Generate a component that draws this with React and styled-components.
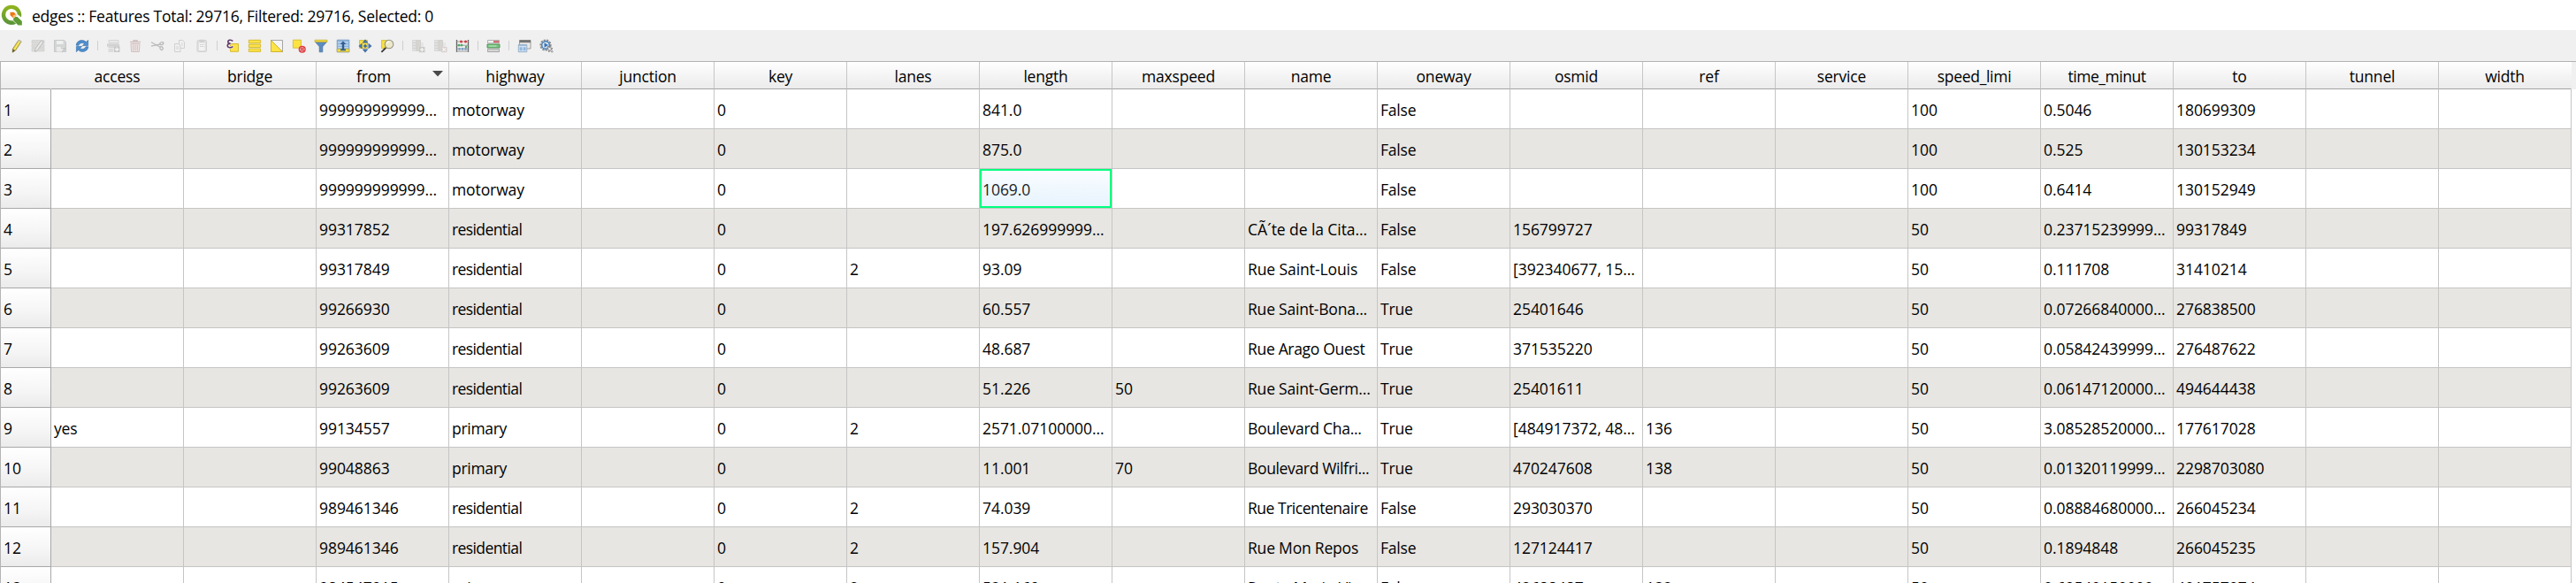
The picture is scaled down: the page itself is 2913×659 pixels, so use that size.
import React from "react";
import styled, { createGlobalStyle, css } from "styled-components";

const GlobalStyle = createGlobalStyle`
  * { box-sizing: border-box; }
  html, body { margin: 0; padding: 0; overflow: hidden; background: #fff; }
  body { font-family: "Open Sans", "Noto Sans", sans-serif; font-size: 17.5px; color: #000; }
`;

const Window = styled.div`
  display: flex;
  flex-direction: column;
  width: 2913px;
  height: 659px;
  overflow: hidden;
  background: #fff;
`;

const TitleBar = styled.header`
  display: flex;
  align-items: center;
  gap: 11px;
  flex: none;
  height: 34px;
  padding-left: 1px;
`;

const Title = styled.h1`
  margin: 0;
  padding-top: 1px;
  font-size: 17.5px;
  font-weight: 400;
  line-height: 24px;
  letter-spacing: -0.24px;
  white-space: pre;
`;

const Toolbar = styled.nav`
  display: flex;
  align-items: center;
  flex: none;
  height: 35px;
  padding-left: 5px;
  background: #f0f0f0;
`;

const ToolButton = styled.button`
  display: flex;
  align-items: center;
  justify-content: center;
  width: 25px;
  height: 25px;
  padding: 0;
  border: 0;
  background: none;
  opacity: ${(p) => (p.disabled ? 0.36 : 1)};
  svg { display: block; }
`;

const Separator = styled.i`
  width: 10px;
  height: 11px;
  &::before {
    content: "";
    display: block;
    width: 1px;
    height: 100%;
    margin-left: 5px;
    background: #cfcfcf;
  }
`;

const columns = css`
  display: grid;
  grid-template-columns: 57px repeat(19, 150px);
`;

const Table = styled.main`
  flex: 1;
  overflow: hidden;
  border-left: 1px solid #b4b4b4;
`;

const HeaderRow = styled.div`
  ${columns}
  height: 32px;
  border-top: 1px solid #b2b2b2;
  background: #f0f0f0;
`;

const HeaderCell = styled.div`
  position: relative;
  display: flex;
  align-items: center;
  justify-content: center;
  padding: 2px ${(p) => (p.$sorted ? 20 : 0)}px 0 0;
  border-right: 1px solid ${(p) => (p.$open ? "transparent" : "#c6c6c6")};
  border-bottom: 1px solid #a3a3a3;
  background: linear-gradient(#ffffff, #f4f4f4 50%, #ebebeb) border-box;
`;

const SortArrow = styled.svg`
  position: absolute;
  top: 10px;
  right: 6px;
`;

const Row = styled.div`
  ${columns}
  height: 45px;
  background: ${(p) => (p.$alt ? "#e8e6e2" : "#ffffff")};
  width: 2907px;
`;

const RowNumber = styled.div`
  display: flex;
  align-items: center;
  padding: 2px 0 0 3px;
  border-right: 1px solid #a8a8a8;
  border-bottom: 1px solid #a8a8a8;
  background: linear-gradient(#ffffff, #f5f5f5 60%, #ebebeb);
`;

const Cell = styled.div`
  display: flex;
  align-items: center;
  padding: 2px 0 0 3px;
  overflow: hidden;
  border-right: 1px solid #c5c5c5;
  border-bottom: 1px solid #c5c5c5;
  ${(p) =>
    p.$current &&
    css`
      color: #1d2327;
      background: linear-gradient(#fbfdff, #e6f3fd);
      box-shadow: inset 0 0 0 2px #00ff80;
    `}
`;

const Label = styled.span`
  white-space: pre;
  letter-spacing: ${(p) => p.$tracking}px;
`;

const TRACKING = {
  residential: -0.6,
  primary: -0.3,
  motorway: -0.1,
  "Rue Saint-Louis": -0.08,
  "Rue Tricentenaire": -0.48,
  "Rue Arago Ouest": -0.32,
  "Boulevard Wilfri...": -0.35,
  "Boulevard Cha...": -0.27,
  "CÃ´te de la Cita...": -0.08,
  speed_limi: -0.3,
  time_minut: -0.45,
  highway: -0.15,
};

function Text({ children }) {
  const numeric = /^[[\d., ]*$/.test(children);
  return <Label $tracking={TRACKING[children] ?? (numeric ? -0.05 : -0.2)}>{children}</Label>;
}

const FIELDS = [
  "access", "bridge", "from", "highway", "junction", "key", "lanes", "length", "maxspeed", "name",
  "oneway", "osmid", "ref", "service", "speed_limi", "time_minut", "to", "tunnel", "width",
];

const row = (from, highway, lanes, length, maxspeed, name, oneway, osmid, ref, speed_limi, time_minut, to, access) => ({
  access, from, highway, key: "0", lanes, length, maxspeed, name, oneway, osmid, ref, speed_limi, time_minut, to,
});

const FEATURES = [
  row("999999999999...", "motorway", "", "841.0", "", "", "False", "", "", "100", "0.5046", "180699309"),
  row("999999999999...", "motorway", "", "875.0", "", "", "False", "", "", "100", "0.525", "130153234"),
  row("999999999999...", "motorway", "", "1069.0", "", "", "False", "", "", "100", "0.6414", "130152949"),
  row("99317852", "residential", "", "197.626999999...", "", "CÃ´te de la Cita...", "False", "156799727", "", "50", "0.23715239999...", "99317849"),
  row("99317849", "residential", "2", "93.09", "", "Rue Saint-Louis", "False", "[392340677, 15...", "", "50", "0.111708", "31410214"),
  row("99266930", "residential", "", "60.557", "", "Rue Saint-Bona...", "True", "25401646", "", "50", "0.07266840000...", "276838500"),
  row("99263609", "residential", "", "48.687", "", "Rue Arago Ouest", "True", "371535220", "", "50", "0.05842439999...", "276487622"),
  row("99263609", "residential", "", "51.226", "50", "Rue Saint-Germ...", "True", "25401611", "", "50", "0.06147120000...", "494644438"),
  row("99134557", "primary", "2", "2571.07100000...", "", "Boulevard Cha...", "True", "[484917372, 48...", "136", "50", "3.08528520000...", "177617028", "yes"),
  row("99048863", "primary", "", "11.001", "70", "Boulevard Wilfri...", "True", "470247608", "138", "50", "0.01320119999...", "2298703080"),
  row("989461346", "residential", "2", "74.039", "", "Rue Tricentenaire", "False", "293030370", "", "50", "0.08884680000...", "266045234"),
  row("989461346", "residential", "2", "157.904", "", "Rue Mon Repos", "False", "127124417", "", "50", "0.1894848", "266045235"),
  row("984547915", "primary", "2", "521.169", "", "Route Marie-Vi...", "False", "42688487", "132", "50", "0.69540150000...", "401757074"),
];

const Icon = ({ children }) => (
  <svg width="16" height="16" viewBox="0 0 16 16" fill="none">{children}</svg>
);

const Logo = () => (
  <svg width="24" height="24" viewBox="0 0 24 24" fill="none">
    <defs>
      <linearGradient id="ring" x1="0" y1="0" x2="0" y2="1">
        <stop offset="0" stopColor="#93b61c" />
        <stop offset="1" stopColor="#57933a" />
      </linearGradient>
    </defs>
    <path d="M17.200 21.800A11.200 11.200 0 1 1 22.900 14.500l-4.300-3.400A6.700 6.700 0 1 0 13.200 18.200z" fill="url(#ring)" />
    <path d="M14.200 14h4.400l5.200 5v4.500h-4.300l-5.300-5.300z" fill="#5f9a35" />
    <path d="M10.500 8.800h4.200l3 3.200-3.400 3.600-3.800-3.400z" fill="#ee7913" />
    <path d="M13.500 12.400l3.600-1.400v2.400l-2.800 2.600z" fill="#f8c27a" />
  </svg>
);

const PencilIcon = () => (
  <Icon>
    <path d="M11.2 1.2l3 1.7-6.6 10-3.4 2.3.2-4z" fill="#e9d33f" stroke="#8e8430" strokeWidth=".8" />
    <path d="M12.6 2L6 12.6" stroke="#fff08a" strokeWidth="1" />
    <path d="M11.2 1.2l3 1.7-1 1.4-3-1.7z" fill="#c9c8c2" />
    <path d="M4.4 11.4l2.9 1.7-3.2 2.2z" fill="#5c5840" />
  </Icon>
);

const MultiEditIcon = () => (
  <Icon>
    <path d="M1 1.5h14v3.5H1zM1 6h14v3.5H1zM1 10.500h14V14H1z" fill="#b5b5ae" stroke="#8d8d85" strokeWidth=".6" />
    <path d="M11.500 2l2.500 1.500-6.500 9-3 2 .5-3.500z" fill="#ddd" stroke="#555" strokeWidth=".9" />
  </Icon>
);

const SaveIcon = () => (
  <Icon>
    <path d="M1.500 1.500h11l2 2v11h-13z" fill="#a4a8aa" stroke="#7e8284" />
    <path d="M4 2h7.500v4H4z" fill="#eee" />
    <path d="M4 9h8v5.500H4z" fill="#e4e4e4" />
    <path d="M9 10l4.500 1-3.500 4" stroke="#777" strokeWidth="1.300" />
  </Icon>
);

const RefreshIcon = () => (
  <Icon>
    <path d="M1.200 7.200C1.600 3.500 4.400 1.600 7.600 1.600c2 0 3.500.7 4.700 1.900L14.600 1.400v6.200H8.300l2.200-2.200C8.600 3.900 4.800 4.300 4 7.200z" fill="#4f8fce" stroke="#2c68a8" strokeWidth=".6" />
    <path d="M14.800 8.800c-.4 3.700-3.200 5.600-6.400 5.600-2 0-3.500-.7-4.700-1.900L1.400 14.600V8.400h6.300l-2.200 2.200c1.900 1.500 5.700 1.100 6.500-1.800z" fill="#4f8fce" stroke="#2c68a8" strokeWidth=".6" />
  </Icon>
);

const AddFeatureIcon = () => (
  <Icon>
    <path d="M3 1.500h11v3H3z" fill="#ddd" stroke="#999" strokeWidth=".8" />
    <path d="M1 5.500h14v3.200H1z" fill="#9d9d9d" />
    <path d="M2.500 9.500h7M2.500 12h6M2.500 14h6" stroke="#a8a8a8" strokeWidth="1.300" />
    <path d="M9 8.500h6.500V15H9z" fill="#858585" />
    <path d="M12.250 9.500V14M10 11.750h4.500" stroke="#fff" strokeWidth="1.300" />
  </Icon>
);

const TrashIcon = () => (
  <Icon>
    <path d="M2 3.500h12M6 3V1.700h4V3" stroke="#a07070" strokeWidth="1.400" />
    <path d="M3 5.500h10l-.6 9H3.600z" fill="#ead4d4" stroke="#a07070" strokeWidth="1" />
    <path d="M5.700 6.500v7M8 6.500v7M10.300 6.500v7" stroke="#a07070" strokeWidth="1" />
  </Icon>
);

const CutIcon = () => (
  <Icon>
    <path d="M1 3.800l10.200 5.400M1 8.200l10.500-2.400" stroke="#5c5c5c" strokeWidth="1.300" />
    <ellipse cx="12.800" cy="5.100" rx="2.100" ry="1.400" transform="rotate(-20 12.800 5.100)" stroke="#555" strokeWidth="1.200" />
    <ellipse cx="12.600" cy="10.600" rx="1.600" ry="1.900" transform="rotate(-35 12.600 10.600)" stroke="#555" strokeWidth="1.200" />
  </Icon>
);

const CopyIcon = () => (
  <Icon>
    <path d="M7.500 1.500h4l2 2v7h-6z" fill="#f2f2f2" stroke="#999" />
    <path d="M2.500 5.500h4.200l2.300 2v7H2.500z" fill="#f2f2f2" stroke="#999" />
    <path d="M4 9h3.500M4 11h3.500M9.800 5h2M9.800 7h2" stroke="#aaa" />
  </Icon>
);

const PasteIcon = () => (
  <Icon>
    <rect x="3" y="1.500" width="10.500" height="13" rx="1.500" fill="#c4c4bf" stroke="#999" />
    <path d="M5 4.500h6.500v8.500H5z" fill="#f6f6f6" />
    <path d="M6 1.200h4.500v2.300H6zM6 6.500h4.500M6 8.500h4.500" fill="#999" stroke="#999" strokeWidth=".8" />
  </Icon>
);

const ExpressionIcon = () => (
  <Icon>
    <path d="M5.500 5.500h9v8.800h-9z" fill="#fbe24b" stroke="#d3b527" strokeWidth=".9" />
    <path d="M8.300 2.600C6.600.6 2.800 1 2.800 3.300c0 1.400 1.300 1.900 2.900 1.900-2 0-3.500.6-3.500 2.300 0 2.500 4.100 3 6.100.9" stroke="#f5f0e8" strokeWidth="3" />
    <path d="M8.300 2.600C6.600.6 2.800 1 2.800 3.300c0 1.400 1.300 1.900 2.900 1.900-2 0-3.500.6-3.500 2.300 0 2.500 4.100 3 6.100.9" stroke="#5d3a70" strokeWidth="1.500" />
  </Icon>
);

const SelectAllIcon = () => (
  <Icon>
    <path d="M1.400 1.300h13.200v3.400H1.400zM1.400 6.100h13.200v3.400H1.400zM1.400 11h13.200v3.400H1.400z" fill="#fbe345" stroke="#d0b11e" strokeWidth=".8" />
  </Icon>
);

const InvertIcon = () => (
  <Icon>
    <path d="M1.500 1.500h13v13z" fill="#f4f4f4" stroke="#9c9c9c" strokeWidth=".9" />
    <path d="M1.500 1.500v13h13z" fill="#fbe345" stroke="#cfae22" strokeWidth=".9" />
  </Icon>
);

const DeselectIcon = () => (
  <Icon>
    <path d="M1.400 1.200h9v9h-9z" fill="#fbe345" stroke="#d8ba2a" strokeWidth=".9" />
    <circle cx="11.700" cy="11.700" r="3.400" fill="#f5c9c9" stroke="#dc3a3f" strokeWidth="1.300" />
    <path d="M9.600 13.800l4.300-4.300M9.600 11.500l2-2M12 14l2-2" stroke="#dc3a3f" strokeWidth="1.100" />
  </Icon>
);

const FilterIcon = () => (
  <Icon>
    <path d="M1.200 3h13.600L9.800 8.800v6H6.200v-6z" fill="#5d8bbd" stroke="#42709f" strokeWidth=".7" />
    <path d="M1 1.200h14v2.300H1z" fill="#f0d93a" stroke="#b9a52c" strokeWidth=".6" />
  </Icon>
);

const MoveTopIcon = () => (
  <Icon>
    <path d="M1.200 1.200h13.600v13.600H1.200z" fill="#8db3dc" stroke="#6b95c2" strokeWidth=".8" />
    <path d="M2 4h12M2 7h12M2 9.800h12" stroke="#d6e4f3" strokeWidth="1" />
    <path d="M1.200 11.300h13.600v3.400H1.200z" fill="#f3dc45" stroke="#b9a338" strokeWidth=".6" />
    <path d="M8 2.500L4.600 6h2.200v5.500H5v1.700h6v-1.700H9.200V6h2.200z" fill="#305e94" />
  </Icon>
);

const PanIcon = () => (
  <Icon>
    <path d="M1.500 1.500h9v9h-9z" fill="#f6df42" stroke="#c7ad2d" strokeWidth=".7" />
    <path d="M8 .8l2.800 3.400H5.200zM8 15.200l2.800-3.400H5.200zM.8 8l3.400-2.800v5.600zM15.200 8l-3.400-2.800v5.600z" fill="#4877ad" stroke="#2f5b8d" strokeWidth=".5" />
    <path d="M8 5.800L10.200 8 8 10.200 5.800 8z" fill="#3f6da3" />
  </Icon>
);

const ZoomIcon = () => (
  <Icon>
    <path d="M1.500 1.500h9v9h-9z" fill="#f6df42" stroke="#cdb12b" strokeWidth=".7" />
    <path d="M6.300 10L1.400 14.800" stroke="#3b3a35" strokeWidth="1.800" />
    <circle cx="10" cy="6" r="4.800" fill="#ece8c9" stroke="#96958a" strokeWidth="1.100" />
    <path d="M7.500 5.200A3.200 3.200 0 0 1 10.500 3" stroke="#fff" strokeWidth="1.200" />
  </Icon>
);

const FieldBase = () => (
  <>
    <path d="M1.500 1.500h4v12h-4z" fill="#c9c9c9" stroke="#a2a2a2" strokeWidth=".8" />
    <path d="M6 1.500h4.500v12H6z" fill="#aaa89c" stroke="#929084" strokeWidth=".8" />
    <path d="M11 4h3v7h-3z" fill="#d5d5d5" />
    <path d="M2 4.500h3M2 7.500h3M2 10.500h3" stroke="#9a9a9a" />
  </>
);

const NewFieldIcon = () => (
  <Icon>
    <FieldBase />
    <path d="M9 9h6.500v6.200H9z" fill="#8a8a80" />
    <path d="M12.250 10v4.200M10 12.100h4.500" stroke="#fff" strokeWidth="1.300" />
  </Icon>
);

const DeleteFieldIcon = () => (
  <Icon>
    <FieldBase />
    <path d="M9 9h6.500v6.200H9z" fill="#b49a9a" />
    <path d="M10.500 10.300l3.500 3.600M14 10.300l-3.500 3.600" stroke="#fff" strokeWidth="1.300" />
  </Icon>
);

const AbacusIcon = () => (
  <Icon>
    <path d="M1.500 1v14M14.500 1v14" stroke="#5f5f5f" strokeWidth="1.300" />
    <path d="M1.500 3h13M1.500 7.200h13M1.500 11.200h13M1 14h14" stroke="#9a9a9a" strokeWidth="1" />
    <g fill="#d33a3f"><circle cx="6.500" cy="3" r="1.500" /><circle cx="11.500" cy="3" r="1.500" /></g>
    <g fill="#54a86b"><circle cx="4" cy="7.200" r="1.400" /><circle cx="7" cy="7.200" r="1.400" /><circle cx="12" cy="9" r="1.200" /></g>
    <g fill="#7a9cc4"><circle cx="4.500" cy="11.400" r="1.300" /><circle cx="8" cy="11.400" r="1.300" /><circle cx="11.500" cy="11.400" r="1.300" /></g>
  </Icon>
);

const FormattingIcon = () => (
  <Icon>
    <path d="M1.500 1.500h13v3.300h-13z" fill="#f1f1f1" stroke="#a0a0a0" strokeWidth=".8" />
    <path d="M8 2.300h6v1.800H8z" fill="#ce5358" />
    <path d="M1 6h14v4H1z" fill="#77c47f" stroke="#4b8d54" strokeWidth=".9" />
    <path d="M2.500 8h9" stroke="#c6ecc9" strokeWidth="1" />
    <path d="M1.500 11.300h13v3.300h-13z" fill="#d4d4d4" stroke="#999" strokeWidth=".8" />
  </Icon>
);

const DockIcon = () => (
  <Icon>
    <path d="M2.500 1.500h12.500v9.500H2.500z" fill="#e9e9e9" stroke="#8a8a8a" strokeWidth=".8" />
    <path d="M2.500 1.300h12.500v2.900H2.500z" fill="#747474" />
    <path d="M1.300 6.500h9.500v8.200H1.300z" fill="#dbe8f5" stroke="#8fa9c4" strokeWidth=".9" />
    <path d="M1.300 6.500h9.500v1.600H1.300z" fill="#9fb8d2" />
    <path d="M2.600 9.300h3v4h-3zM6.600 9.300h3v4h-3z" fill="#8fb6e0" />
  </Icon>
);

const ActionsIcon = () => (
  <Icon>
    <circle cx="7" cy="7" r="5.700" stroke="#8c8c8c" strokeWidth="1.800" strokeDasharray="2.300 1.100" />
    <circle cx="7" cy="7" r="4.300" fill="#dfe9f4" stroke="#4a7fb8" strokeWidth="1.500" />
    <path d="M5.500 4.300L10 7 5.500 9.700z" fill="#3a72b0" />
    <path d="M9 8.500l6 2.300-2.200.9 2.500 2.600-1 1-2.600-2.600-.9 2.200z" fill="#e9e9e9" stroke="#666" strokeWidth=".7" />
  </Icon>
);

const TOOLS = [
  [[PencilIcon], [MultiEditIcon, true], [SaveIcon, true], [RefreshIcon]],
  [[AddFeatureIcon, true], [TrashIcon, true], [CutIcon, true], [CopyIcon, true], [PasteIcon, true]],
  [[ExpressionIcon], [SelectAllIcon], [InvertIcon], [DeselectIcon], [FilterIcon], [MoveTopIcon], [PanIcon], [ZoomIcon]],
  [[NewFieldIcon, true], [DeleteFieldIcon, true], [AbacusIcon]],
  [[FormattingIcon]],
  [[DockIcon], [ActionsIcon]],
];

export default function App() {
  return (
    <Window>
      <GlobalStyle />
      <TitleBar>
        <Logo />
        <Title>edges :: Features Total: 29716, Filtered: 29716, Selected: 0</Title>
      </TitleBar>
      <Toolbar>
        {TOOLS.map((group, g) => (
          <React.Fragment key={g}>
            {g > 0 && <Separator />}
            {group.map(([Glyph, disabled], i) => (
              <ToolButton key={i} disabled={disabled}><Glyph /></ToolButton>
            ))}
          </React.Fragment>
        ))}
      </Toolbar>
      <Table>
        <HeaderRow>
          <HeaderCell $open />
          {FIELDS.map((f) => (
            <HeaderCell key={f} $sorted={f === "from"} $open={f === "width"}>
              <Text>{f}</Text>
              {f === "from" && (
                <SortArrow width="12" height="7" viewBox="0 0 12 7"><path d="M0 0h12L6 6.500z" fill="#4a4a4a" /></SortArrow>
              )}
            </HeaderCell>
          ))}
        </HeaderRow>
        {FEATURES.map((feature, i) => (
          <Row key={i} $alt={i % 2 === 1}>
            <RowNumber><Text>{String(i + 1)}</Text></RowNumber>
            {FIELDS.map((f) => (
              <Cell key={f} $current={i === 2 && f === "length"}>
                {feature[f] && <Text>{feature[f]}</Text>}
              </Cell>
            ))}
          </Row>
        ))}
      </Table>
    </Window>
  );
}
